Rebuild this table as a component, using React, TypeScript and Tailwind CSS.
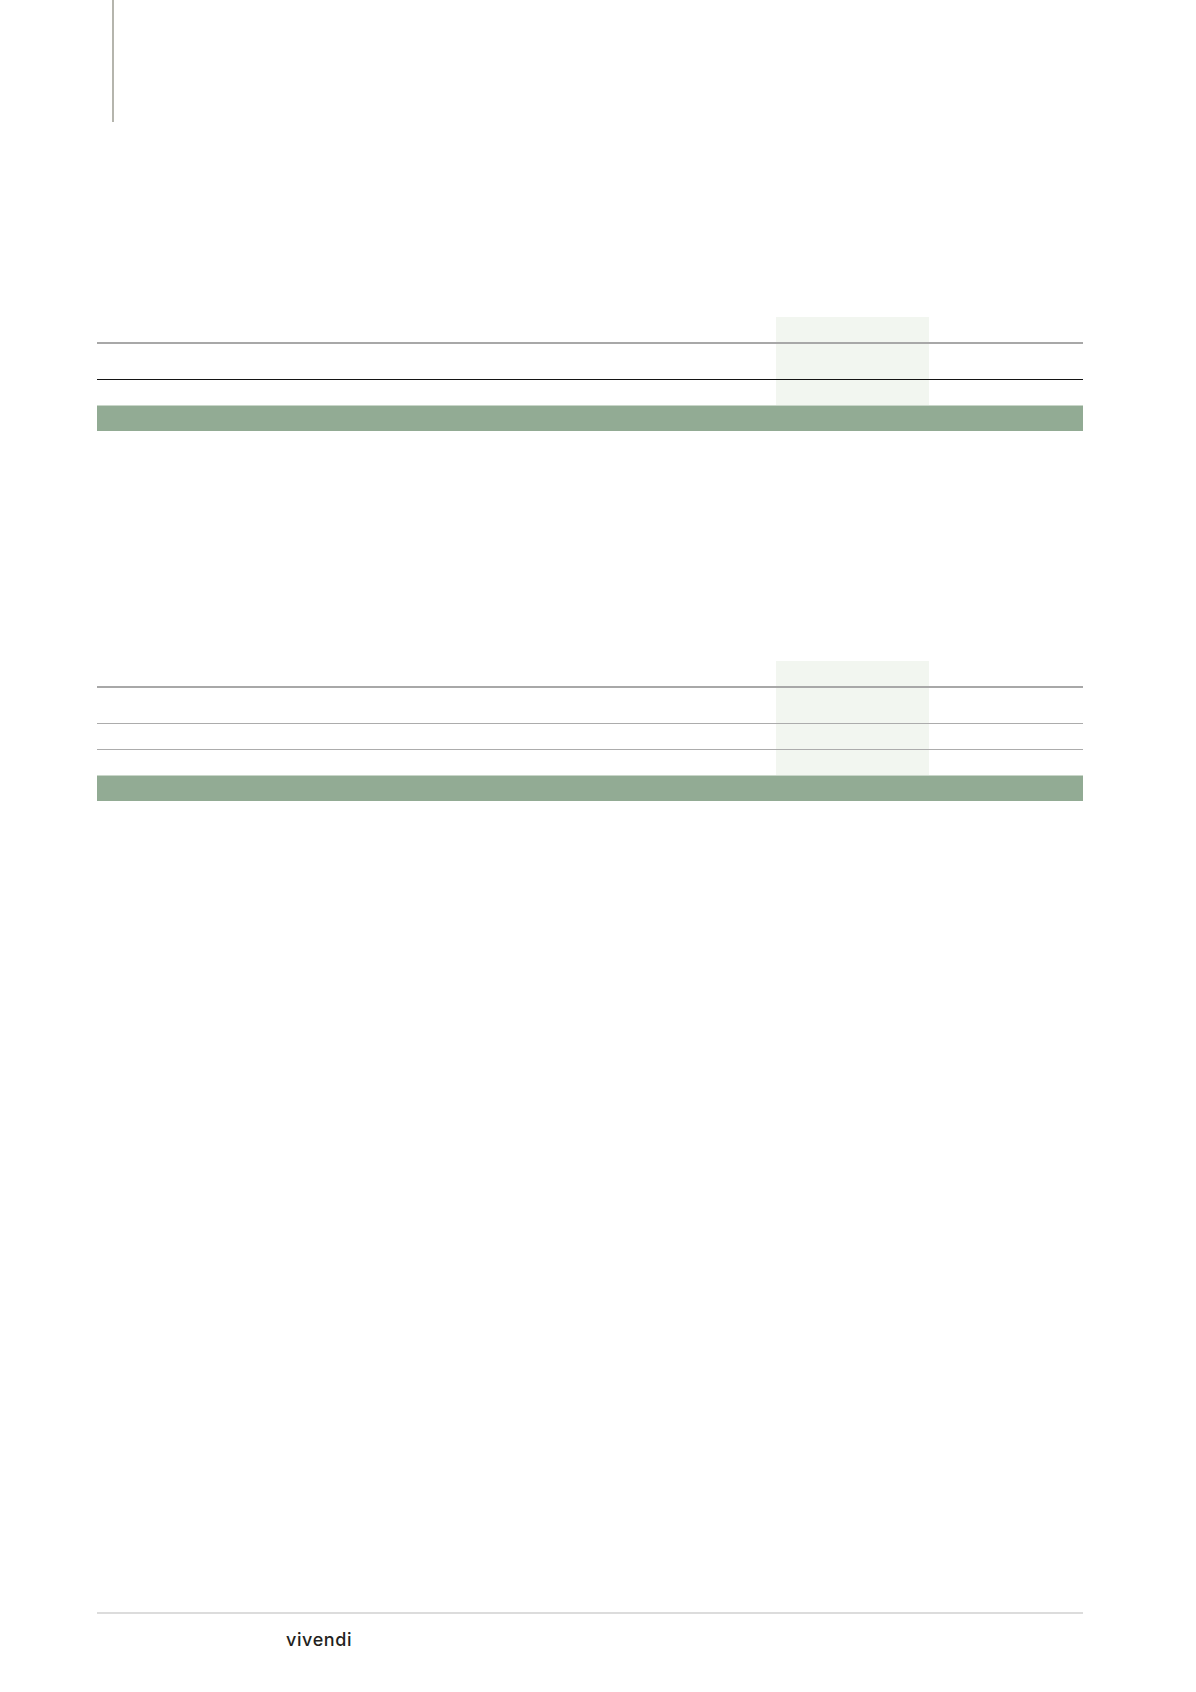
import React from "react";

// Row of the table: the middle column carries the pale highlight
const Fila = ({ alto, borde }: { alto: string; borde?: string }) => (
  <div className={`grid grid-cols-[679px_153px_154px] ${alto} ${borde ?? ""}`}>
    <div />
    <div className="bg-[#f2f6f0]" />
    <div />
  </div>
);

const Tabla = ({ filas }: { filas: { alto: string; borde?: string }[] }) => (
  <div className="w-[986px]">
    {filas.map((f, i) => (
      <Fila key={i} alto={f.alto} borde={f.borde} />
    ))}
    <div className="h-[26px] bg-[#92ab94] border-t border-[#c9d6c9]" />
  </div>
);

const App: React.FC = () => {
  return (
    <div className="relative w-[1196px] h-[1692px] bg-white font-['Liberation_Sans',sans-serif]">
      {/* marca vertical */}
      <div className="ml-[112px] w-[2px] h-[122px] bg-[#b5b5ad]" />

      <div className="pl-[97px]">
        {/* TABLA 1 */}
        <div className="mt-[195px]">
          <Tabla
            filas={[
              { alto: "h-[27px]", borde: "border-b-2 border-[#a8a8a8]" },
              { alto: "h-[36px]", borde: "border-b border-[#141414]" },
              { alto: "h-[25px]" },
            ]}
          />
        </div>

        {/* TABLA 2 */}
        <div className="mt-[230px]">
          <Tabla
            filas={[
              { alto: "h-[27px]", borde: "border-b-2 border-[#a8a8a8]" },
              { alto: "h-[36px]", borde: "border-b border-[#acacac]" },
              { alto: "h-[26px]", borde: "border-b border-[#acacac]" },
              { alto: "h-[25px]" },
            ]}
          />
        </div>

        {/* PIE */}
        <div className="mt-[811px] w-[986px] border-t-2 border-[#dcdcdc]" />
        <div className="pl-[189px] pt-[15px]">
          <span className="text-[18px] leading-[20px] font-medium tracking-[0.6px] text-[#231f20] font-['Inter',sans-serif]">
            vivendi
          </span>
        </div>
      </div>
    </div>
  );
};

export default App;
